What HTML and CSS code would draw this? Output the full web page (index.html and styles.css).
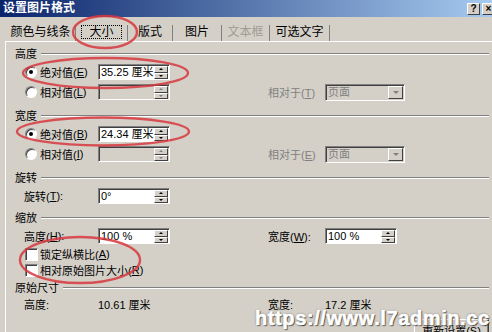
FILE: index.html
```html
<!DOCTYPE html>
<html lang="zh-CN">
<head>
    <meta charset="UTF-8">
    <title>设置图片格式</title>
    <link rel="stylesheet" href="styles.css">
</head>
<body>
<div class="dialog">
    <!-- 标题栏 -->
    <div class="titlebar">
        <span class="title">设置图片格式</span>
        <div class="title-btns">
            <span class="tbtn">?</span>
            <span class="tbtn">×</span>
        </div>
    </div>

    <!-- 选项卡 -->
    <div class="tabs">
        <span class="tab t1">颜色与线条</span>
        <span class="tab t2 active"><span class="focus">大小</span></span>
        <span class="tab t3">版式</span>
        <span class="tab t4">图片</span>
        <span class="tab t5 disabled">文本框</span>
        <span class="tab t6">可选文字</span>
    </div>

    <div class="panel">
        <!-- 高度 -->
        <div class="section">
            <div class="sec-head"><span>高度</span></div>
            <div class="row">
                <label class="lbl"><span class="radio on"></span>绝对值(<u>E</u>)</label>
                <div class="spin"><span class="val">35.25 厘米</span><span class="arrows"><i class="up"></i><i class="down"></i></span></div>
            </div>
            <div class="row">
                <label class="lbl"><span class="radio"></span>相对值(<u>L</u>)</label>
                <div class="spin off"><span class="val"></span><span class="arrows"><i class="up"></i><i class="down"></i></span></div>
                <label class="lbl2 grey">相对于(<u>T</u>)</label>
                <div class="combo off"><span class="val">页面</span><span class="drop"><i class="down"></i></span></div>
            </div>
        </div>

        <!-- 宽度 -->
        <div class="section">
            <div class="sec-head"><span>宽度</span></div>
            <div class="row">
                <label class="lbl"><span class="radio on"></span>绝对值(<u>B</u>)</label>
                <div class="spin"><span class="val">24.34 厘米</span><span class="arrows"><i class="up"></i><i class="down"></i></span></div>
            </div>
            <div class="row">
                <label class="lbl"><span class="radio"></span>相对值(<u>I</u>)</label>
                <div class="spin off"><span class="val"></span><span class="arrows"><i class="up"></i><i class="down"></i></span></div>
                <label class="lbl2 grey">相对于(<u>E</u>)</label>
                <div class="combo off"><span class="val">页面</span><span class="drop"><i class="down"></i></span></div>
            </div>
        </div>

        <!-- 旋转 -->
        <div class="section rotate">
            <div class="sec-head"><span>旋转</span></div>
            <div class="row">
                <label class="lbl">旋转(<u>T</u>):</label>
                <div class="spin"><span class="val">0°</span><span class="arrows"><i class="up"></i><i class="down"></i></span></div>
            </div>
        </div>

        <!-- 缩放 -->
        <div class="section scale">
            <div class="sec-head"><span>缩放</span></div>
            <div class="row">
                <label class="lbl">高度(<u>H</u>):</label>
                <div class="spin"><span class="val">100 %</span><span class="arrows"><i class="up"></i><i class="down"></i></span></div>
                <label class="lbl2">宽度(<u>W</u>):</label>
                <div class="spin"><span class="val">100 %</span><span class="arrows"><i class="up"></i><i class="down"></i></span></div>
            </div>
            <div class="row check-row">
                <label class="lbl wide"><span class="check"></span>锁定纵横比(<u>A</u>)</label>
            </div>
            <div class="row check-row">
                <label class="lbl wide"><span class="check"></span>相对原始图片大小(<u>R</u>)</label>
            </div>
        </div>

        <!-- 原始尺寸 -->
        <div class="section last">
            <div class="sec-head"><span>原始尺寸</span></div>
            <div class="row">
                <span class="lbl">高度:</span>
                <span class="plain">10.61 厘米</span>
                <span class="lbl2">宽度:</span>
                <span class="plain">17.2 厘米</span>
            </div>
        </div>

        <div class="btn-row">
            <button class="btn">重新设置(<u>S</u>)</button>
        </div>
    </div>
</div>

<!-- 标注 -->
<svg class="marks" width="492" height="332" viewBox="0 0 492 332">
    <g fill="none" stroke="#d8383f" stroke-width="2.4" opacity="0.85">
        <ellipse cx="105" cy="32" rx="32" ry="16"/>
        <ellipse cx="105.5" cy="73" rx="82.5" ry="15"/>
        <ellipse cx="103" cy="131.5" rx="86" ry="14"/>
        <ellipse cx="80" cy="260" rx="60" ry="23"/>
    </g>
</svg>

<div class="watermark">https://www.l7admin.cc</div>
</body>
</html>
```

FILE: styles.css
```css
* {
    box-sizing: border-box;
}

body {
    margin: 0;
    width: 492px;
    height: 332px;
    overflow: hidden;
    position: relative;
    background-color: #d4d0c8;
    font-family: "Liberation Sans", "Noto Sans CJK SC", sans-serif;
    font-size: 11px;
    color: #000;
}

u {
    text-decoration: underline;
}

/* 标题栏 */
.titlebar {
    height: 17px;
    padding-left: 3px;
    display: flex;
    align-items: center;
    justify-content: space-between;
    background: linear-gradient(to right, #0a246a, #a6caf0);
}

.title {
    color: #fff;
    font-weight: bold;
    font-size: 12px;
    line-height: 17px;
}

.title-btns {
    display: flex;
    gap: 2px;
    margin-right: -3px;
}

.tbtn {
    width: 13px;
    height: 12px;
    background-color: #d4d0c8;
    border: 1px solid;
    border-color: #fff #404040 #404040 #fff;
    font: bold 10px/10px "Liberation Sans", sans-serif;
    text-align: center;
}

/* 选项卡 */
.tabs {
    height: 24px;
    padding-left: 6px;
    display: flex;
    align-items: flex-end;
}

.tab {
    height: 16px;
    line-height: 15px;
    font-size: 12px;
    text-align: center;
    border-right: 1px solid #808080;
}

.t1 { width: 70px; }
.t2 { width: 52px; }
.t3 { width: 45px; }
.t4 { width: 49px; }
.t5 { width: 48px; }
.t6 { width: 60px; }

.tab.disabled {
    color: #a09c94;
}

.tab.active .focus {
    display: inline-block;
    width: 41px;
    height: 14px;
    line-height: 12px;
    border: 1px dotted #000;
}

/* 面板 */
.panel {
    margin-left: 5px;
    border-top: 1px solid #fff;
    border-left: 1px solid #fff;
    padding: 5px 3px 0 9px;
}

.section {
    margin-bottom: 7px;
}

.section.rotate {
    margin-bottom: 5px;
}

.section.scale {
    margin-bottom: 3px;
}

.section.last {
    margin-bottom: 0;
}

.sec-head {
    height: 14px;
    display: flex;
    align-items: center;
    margin-bottom: 1px;
    line-height: 14px;
}

.sec-head::after {
    content: '';
    flex: 1;
    margin-left: 4px;
    border-top: 1px solid #808080;
    border-bottom: 1px solid #fff;
}

.row {
    height: 20px;
    padding-left: 9px;
    display: flex;
    align-items: center;
}

.check-row {
    height: 16px;
}

.last .row {
    height: 16px;
}

.lbl {
    width: 74px;
    display: flex;
    align-items: center;
    white-space: nowrap;
}

.lbl.wide {
    width: auto;
}

.lbl2 {
    width: 57px;
    margin-left: 98px;
    white-space: nowrap;
}

.grey {
    color: #808080;
}

.plain {
    width: 72px;
    white-space: nowrap;
}

/* 单选 / 复选 */
.radio {
    width: 12px;
    height: 12px;
    margin: 0 3px 0 1px;
    border-radius: 50%;
    background-color: #fff;
    border: 1px solid;
    border-color: #808080 #fff #fff #808080;
    box-shadow: inset 1px 1px 0 #404040;
    position: relative;
}

.radio.on::after {
    content: '';
    position: absolute;
    left: 3px;
    top: 3px;
    width: 4px;
    height: 4px;
    border-radius: 50%;
    background-color: #000;
}

.check {
    width: 13px;
    height: 13px;
    margin: 0 2px 0 1px;
    background-color: #fff;
    border: 1px solid;
    border-color: #808080 #fff #fff #808080;
    box-shadow: inset 1px 1px 0 #404040;
}

/* 数值框 */
.spin,
.combo {
    width: 72px;
    height: 16px;
    display: flex;
    background-color: #fff;
    border: 1px solid;
    border-color: #808080 #fff #fff #808080;
    box-shadow: inset 1px 1px 0 #404040;
}

.combo {
    width: 80px;
    height: 17px;
}

.spin.off,
.combo.off {
    background-color: #d4d0c8;
}

.val {
    flex: 1;
    padding-left: 2px;
    padding-top: 1px;
    line-height: 13px;
    white-space: nowrap;
    overflow: hidden;
}

.combo .val {
    color: #808080;
}

.arrows {
    width: 15px;
    display: flex;
    flex-direction: column;
    padding: 1px 1px 0 0;
}

.arrows i,
.drop {
    flex: 1;
    display: flex;
    align-items: center;
    justify-content: center;
    background-color: #d4d0c8;
    border: 1px solid;
    border-color: #fff #404040 #404040 #fff;
}

.drop {
    flex: none;
    width: 15px;
    margin: 1px 1px 1px 0;
}

.arrows i::after,
.drop i::after {
    content: '';
    border-left: 2px solid transparent;
    border-right: 2px solid transparent;
}

.arrows .up::after {
    border-bottom: 2px solid #000;
}

.arrows .down::after {
    border-top: 2px solid #000;
}

.off .arrows .up::after {
    border-bottom-color: #808080;
}

.off .arrows .down::after {
    border-top-color: #808080;
}

.drop i::after {
    display: block;
    border-left-width: 3px;
    border-right-width: 3px;
    border-top: 3px solid #808080;
}

/* 按钮 */
.btn-row {
    display: flex;
    justify-content: flex-end;
    margin-top: 7px;
}

.btn {
    width: 75px;
    height: 21px;
    padding: 0;
    background-color: #d4d0c8;
    border: 1px solid;
    border-color: #fff #404040 #404040 #fff;
    box-shadow: inset -1px -1px 0 #808080;
    font: 11px "Liberation Sans", "Noto Sans CJK SC", sans-serif;
}

/* 红色标注和水印 */
.marks {
    position: absolute;
    left: 0;
    top: 0;
    pointer-events: none;
}

.watermark {
    position: absolute;
    left: 255px;
    top: 308px;
    font: bold 20px/20px "Liberation Sans", sans-serif;
    letter-spacing: 0.6px;
    color: #fff;
    -webkit-text-stroke: 0.6px #fff;
    text-shadow: 0 0 2px #555, 1px 1px 1px #333;
    white-space: nowrap;
}
```
